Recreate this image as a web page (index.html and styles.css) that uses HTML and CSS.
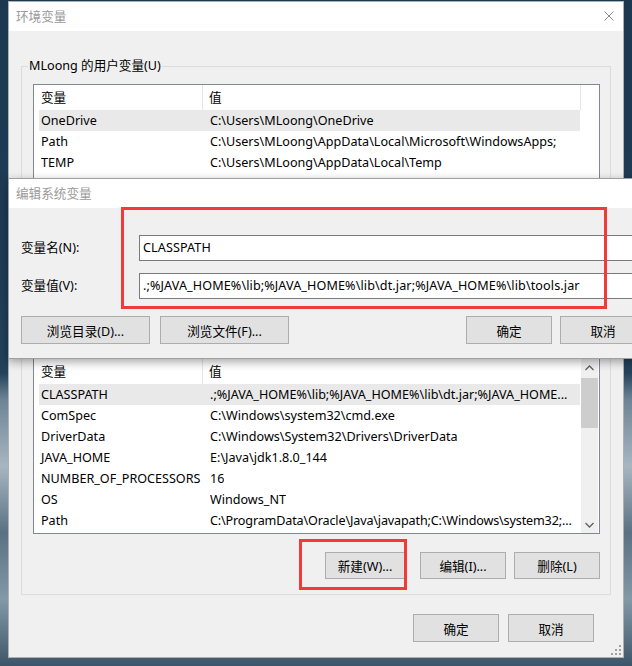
FILE: index.html
```html
<!DOCTYPE html>
<html lang="zh-CN">
<head>
<meta charset="utf-8">
<title>环境变量</title>
<link rel="stylesheet" href="styles.css">
</head>
<body>
<div class="desktop">
  <div class="window">
    <div class="titlebar">
      <span class="title">环境变量</span>
      <svg class="close" width="10" height="10" viewBox="0 0 10 10"><path d="M0.5 0.5L9.5 9.5M9.5 0.5L0.5 9.5" stroke="#8a8a8a" stroke-width="1" fill="none"/></svg>
    </div>
    <div class="wbody">
      <div class="group group-user">
        <span class="legend">MLoong 的用户变量(U)</span>
        <div class="list list-user">
          <div class="lhead"><span class="c1">变量</span><span class="c2">值</span></div>
          <div class="row sel"><span class="c1">OneDrive</span><span class="c2">C:\Users\MLoong\OneDrive</span></div>
          <div class="row"><span class="c1">Path</span><span class="c2">C:\Users\MLoong\AppData\Local\Microsoft\WindowsApps;</span></div>
          <div class="row"><span class="c1">TEMP</span><span class="c2">C:\Users\MLoong\AppData\Local\Temp</span></div>
        </div>
      </div>
      <div class="group group-sys">
        <div class="list list-sys">
          <div class="rows">
            <div class="lhead"><span class="c1">变量</span><span class="c2">值</span></div>
            <div class="row sel"><span class="c1">CLASSPATH</span><span class="c2">.;%JAVA_HOME%\lib;%JAVA_HOME%\lib\dt.jar;%JAVA_HOME...</span></div>
            <div class="row"><span class="c1">ComSpec</span><span class="c2">C:\Windows\system32\cmd.exe</span></div>
            <div class="row"><span class="c1">DriverData</span><span class="c2">C:\Windows\System32\Drivers\DriverData</span></div>
            <div class="row"><span class="c1">JAVA_HOME</span><span class="c2">E:\Java\jdk1.8.0_144</span></div>
            <div class="row"><span class="c1">NUMBER_OF_PROCESSORS</span><span class="c2">16</span></div>
            <div class="row"><span class="c1">OS</span><span class="c2">Windows_NT</span></div>
            <div class="row"><span class="c1">Path</span><span class="c2 tight">C:\ProgramData\Oracle\Java\javapath;C:\Windows\system32;...</span></div>
          </div>
          <div class="vscroll">
            <div class="sb-arrow"><svg width="9" height="6" viewBox="0 0 9 6"><path d="M0.5 5L4.5 1L8.5 5" stroke="#606060" stroke-width="1.3" fill="none"/></svg></div>
            <div class="sb-track"><div class="sb-thumb"></div></div>
            <div class="sb-arrow"><svg width="9" height="6" viewBox="0 0 9 6"><path d="M0.5 1L4.5 5L8.5 1" stroke="#606060" stroke-width="1.3" fill="none"/></svg></div>
          </div>
        </div>
        <div class="btnrow">
          <button class="btn btn-new">新建(W)...</button>
          <button class="btn btn-edit">编辑(I)...</button>
          <button class="btn btn-del">删除(L)</button>
        </div>
      </div>
      <div class="footer">
        <button class="btn btn-foot">确定</button>
        <button class="btn btn-foot">取消</button>
      </div>
    </div>
    <svg class="grip" width="10" height="10" viewBox="0 0 10 10"><g fill="#a0a0a0"><rect x="8" y="0" width="2" height="2"/><rect x="4" y="4" width="2" height="2"/><rect x="8" y="4" width="2" height="2"/><rect x="0" y="8" width="2" height="2"/><rect x="4" y="8" width="2" height="2"/><rect x="8" y="8" width="2" height="2"/></g></svg>
  </div>

  <div class="dialog">
    <div class="dtitle">编辑系统变量</div>
    <div class="dbody">
      <div class="fields">
        <label class="flabel">变量名(N):</label>
        <div class="field">CLASSPATH</div>
        <label class="flabel">变量值(V):</label>
        <div class="field">.;%JAVA_HOME%\lib;%JAVA_HOME%\lib\dt.jar;%JAVA_HOME%\lib\tools.jar</div>
      </div>
      <div class="dbtns">
        <button class="btn btn-wide">浏览目录(D)...</button>
        <button class="btn btn-wide">浏览文件(F)...</button>
        <span class="spacer"></span>
        <button class="btn btn-dlg">确定</button>
        <button class="btn btn-dlg">取消</button>
      </div>
    </div>
  </div>

  <div class="mark mark-fields"></div>
  <div class="mark mark-new"></div>
</div>
</body>
</html>
```

FILE: styles.css
```css
* { box-sizing: border-box; }

html, body {
  margin: 0;
  padding: 0;
  overflow: hidden;
}

body {
  font-family: "Noto Sans", "Noto Sans CJK SC", sans-serif;
  font-size: 12.6px;
  color: #000;
}

.desktop {
  position: relative;
  width: 632px;
  height: 666px;
  padding: 1px 8px 0 8px;
  overflow: hidden;
  background: linear-gradient(180deg, #1c3851 0%, #1f3c56 40%, #23425b 56%, #6d8496 60%, #a7b6c1 70%, #5a7183 80%, #8399a8 90%, #3c5568 100%);
}

.window {
  position: relative;
  width: 616px;
  height: 657px;
  background: #f0f0f0;
  border: 1px solid #b0b0b0;
  display: flex;
  flex-direction: column;
}

.titlebar {
  height: 29px;
  background: #fff;
  display: flex;
  align-items: center;
  padding-left: 7px;
  padding-right: 9px;
}

.title {
  flex: 1;
  color: #9a9a9a;
  line-height: 29px;
}

.close { display: block; margin-top: -2px; }

.wbody {
  flex: 1;
  padding: 35px 12px 0 12px;
  display: flex;
  flex-direction: column;
}

.group {
  position: relative;
  border: 1px solid #dcdcdc;
}

.legend {
  position: absolute;
  top: -9px;
  left: 6px;
  padding: 0 1px;
  line-height: 16px;
  background: #f0f0f0;
  white-space: nowrap;
}

.group-user {
  height: 262px;
  padding: 17px 10px 0 11px;
}

.group-sys {
  margin-top: 12px;
  padding: 17px 10px 15px 11px;
}

.list {
  background: #fff;
  border: 1px solid #828790;
}

.list-user {
  height: 230px;
  padding-left: 5px;
  overflow: hidden;
}

.list-sys {
  height: 176px;
  padding-left: 5px;
  display: flex;
  gap: 1px;
}

.rows { width: 541px; }

.lhead {
  display: flex;
  height: 25px;
  line-height: 25px;
  width: 542px;
}

.list-user .lhead { border-right: 1px solid #e5e5e5; }
.list-sys .lhead { width: 541px; }

.lhead .c1 {
  width: 164px;
  padding-left: 2px;
  border-right: 1px solid #e5e5e5;
}

.lhead .c2 { padding-left: 6px; }

.row {
  display: flex;
  width: 541px;
  height: 21px;
  line-height: 21px;
  white-space: nowrap;
}

.row.sel { background: #e9e9e9; }

.row .c1 {
  width: 164px;
  flex: none;
  padding-left: 2px;
  overflow: hidden;
}

.row .c2 {
  padding-left: 7px;
  overflow: hidden;
}

.row .c2.tight { letter-spacing: -0.15px; }

.vscroll {
  width: 17px;
  background: #f0f0f0;
  display: flex;
  flex-direction: column;
}

.sb-arrow {
  height: 17px;
  display: flex;
  align-items: center;
  justify-content: center;
}

.sb-track {
  flex: 1;
  padding-top: 2px;
}

.sb-thumb {
  width: 17px;
  height: 50px;
  background: #cdcdcd;
}

.btn {
  font-family: inherit;
  font-size: inherit;
  color: #000;
  background: #e1e1e1;
  border: 1px solid #adadad;
  border-radius: 0;
  padding: 0;
  margin: 0;
}

.btnrow {
  margin-top: 18px;
  display: flex;
  justify-content: flex-end;
}

.btnrow .btn { height: 27px; }
.btn-new { width: 80px; margin-right: 15px; }
.btn-edit { width: 86px; margin-right: 8px; }
.btn-del { width: 86px; }

.footer {
  margin-top: 19px;
  display: flex;
  justify-content: flex-end;
  gap: 9px;
  padding-right: 17px;
}

.btn-foot { width: 86px; height: 28px; }

.grip {
  position: absolute;
  right: 2px;
  bottom: 2px;
}

.dialog {
  position: absolute;
  left: 8px;
  top: 178px;
  width: 650px;
  height: 181px;
  background: #f0f0f0;
  border: 1px solid #a0a0a0;
  box-shadow: 0 3px 9px rgba(0, 0, 0, 0.35);
  display: flex;
  flex-direction: column;
}

.dtitle {
  height: 29px;
  line-height: 29px;
  background: #fff;
  color: #9a9a9a;
  padding-left: 7px;
}

.dbody {
  padding: 27px 11px 0 12px;
}

.fields {
  display: grid;
  grid-template-columns: 118px 1fr;
  row-gap: 12px;
  align-items: center;
}

.flabel { line-height: 26px; }

.field {
  height: 26px;
  line-height: 24px;
  background: #fff;
  border: 1px solid #7a7a7a;
  padding-left: 3px;
  white-space: nowrap;
  overflow: hidden;
  letter-spacing: 0.11px;
}

.dbtns {
  margin-top: 17px;
  display: flex;
}

.dbtns .btn { height: 28px; }
.btn-wide { width: 129px; margin-right: 10px; }
.spacer { flex: 1; }
.btn-dlg { width: 86px; margin-left: 8px; }

.mark {
  position: absolute;
  border: 3px solid #f23a3a;
}

.mark-fields {
  left: 121px;
  top: 207px;
  width: 486px;
  height: 102px;
}

.mark-new {
  left: 299px;
  top: 539px;
  width: 108px;
  height: 51px;
}
```
